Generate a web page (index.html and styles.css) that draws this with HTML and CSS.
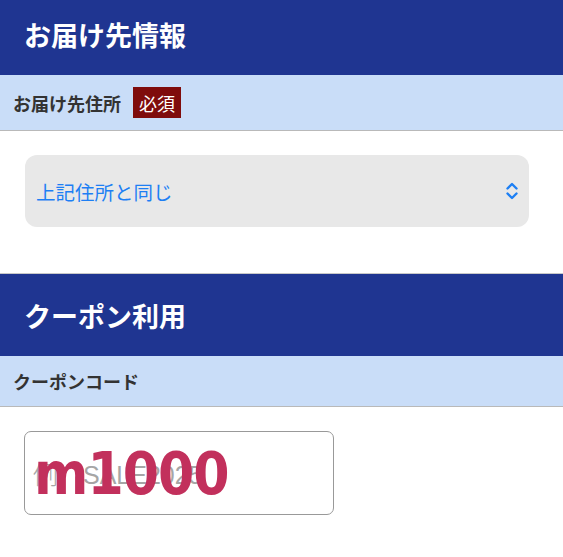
FILE: index.html
```html
<!DOCTYPE html>
<html lang="ja">
<head>
<meta charset="utf-8">
<link rel="stylesheet" href="styles.css">
</head>
<body>
<div class="page">
  <section class="section">
    <h2 class="section-title">お届け先情報</h2>
    <div class="field-label">お届け先住所<span class="badge">必須</span></div>
    <div class="field-body select-body">
      <div class="select">
        <span class="select-text">上記住所と同じ</span>
        <svg class="chev" width="14" height="18" viewBox="0 0 14 18"><path d="M2.5 6.5 L7 2 L11.5 6.5 M2.5 11.5 L7 16 L11.5 11.5" fill="none" stroke="#1d7ff4" stroke-width="2.4" stroke-linecap="round" stroke-linejoin="round"/></svg>
      </div>
    </div>
  </section>
  <section class="section">
    <h2 class="section-title">クーポン利用</h2>
    <div class="field-label">クーポンコード</div>
    <div class="field-body input-body">
      <div class="input-wrap">
        <div class="input"><span class="placeholder">例）SALE2025</span></div>
        <span class="overlay">m1000</span>
      </div>
    </div>
  </section>
</div>
</body>
</html>
```
FILE: styles.css
```css
html, body {
  margin: 0;
  padding: 0;
  background: #ffffff;
  overflow: hidden;
}
body {
  font-family: "Noto Sans CJK JP", "Liberation Sans", sans-serif;
}
.page {
  margin-top: -8px;
}
.section {
  border-top: 1px solid #c8c8c8;
}
.section-title {
  margin: 0;
  height: 82px;
  box-sizing: border-box;
  padding: 0 24px;
  display: flex;
  align-items: center;
  background: #1f3591;
  color: #ffffff;
  font-size: 27px;
  font-weight: 700;
  line-height: 1;
}
.field-label {
  display: flex;
  align-items: center;
  min-height: 26px;
  padding: 12px 13px;
  background: #c9ddf8;
  border-bottom: 1px solid #b9b9b9;
  color: #333333;
  font-size: 18px;
  font-weight: 700;
  line-height: 26px;
}
.badge {
  margin-left: 12px;
  height: 31px;
  display: inline-flex;
  align-items: center;
  padding: 0 6px;
  background: #7f0c0c;
  color: #ffffff;
  font-size: 18px;
  font-weight: 400;
}
.select-body {
  padding: 24px 34px 46px 25px;
}
.select {
  height: 72px;
  box-sizing: border-box;
  padding: 0 11px;
  display: flex;
  align-items: center;
  justify-content: space-between;
  background: #e8e8e8;
  border-radius: 12px;
}
.select-text {
  color: #1d7ff4;
  font-size: 19.5px;
}
.chev {
  display: block;
  margin-right: -1px;
}
.input-body {
  padding: 24px 24px 40px 24px;
}
.input-wrap {
  position: relative;
  width: 310px;
}
.input {
  height: 84px;
  box-sizing: border-box;
  border: 1px solid #999999;
  border-radius: 7px;
  display: flex;
  align-items: center;
  padding: 0 8px;
}
.placeholder {
  font-family: "Liberation Sans", "Noto Sans CJK JP", sans-serif;
  color: #a6a6a6;
  font-size: 25px;
  font-weight: 300;
}
.overlay {
  position: absolute;
  left: 10px;
  top: 10px;
  font-family: "DejaVu Sans", sans-serif;
  font-stretch: condensed;
  font-weight: 700;
  font-size: 58px;
  letter-spacing: -1px;
  line-height: 1.15;
  color: #c2305c;
}
```
